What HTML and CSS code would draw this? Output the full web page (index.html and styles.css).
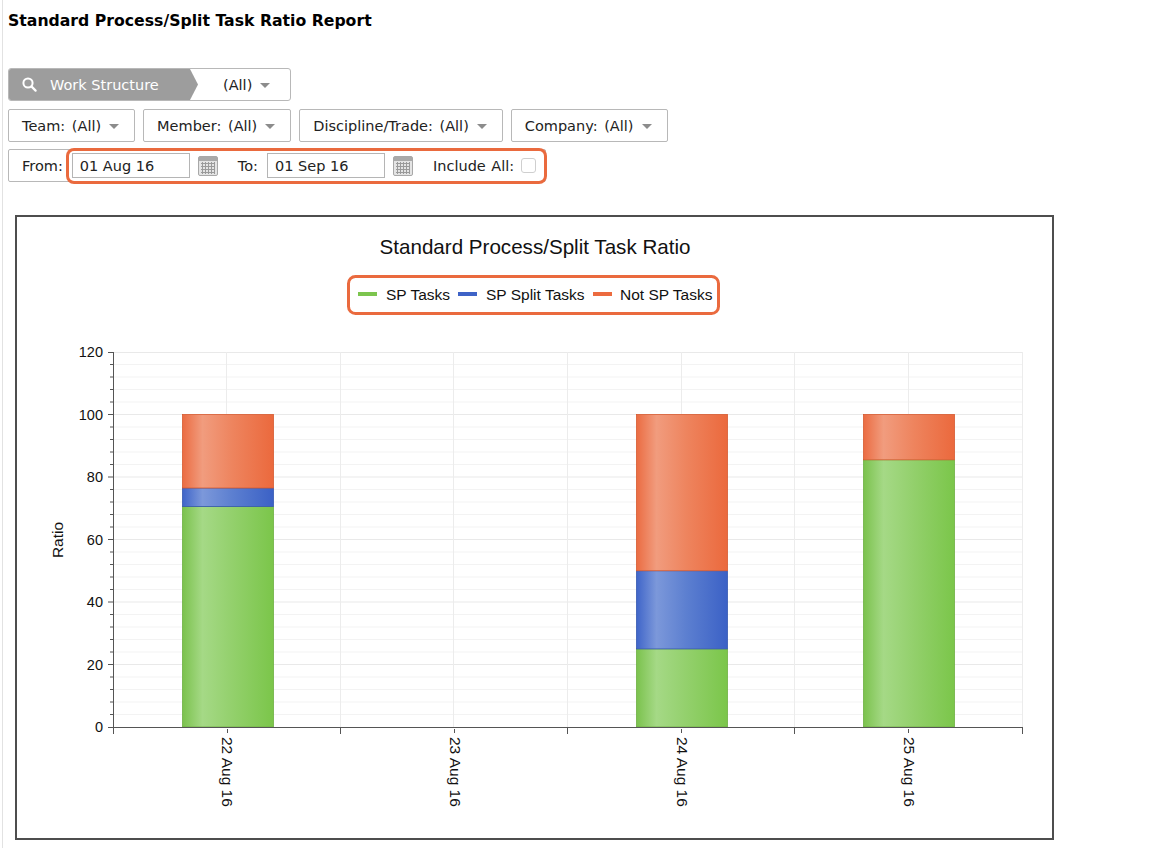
FILE: index.html
```html
<!DOCTYPE html>
<html>
<head>
<meta charset="utf-8">
<title>Standard Process/Split Task Ratio Report</title>
<link rel="stylesheet" href="styles.css">
</head>
<body>
<div class="page">
  <h1 class="title">Standard Process/Split Task Ratio Report</h1>

  <div class="filters">
    <div class="row">
      <div class="ws">
        <div class="ws-label">
          <svg class="search" width="15" height="15" viewBox="0 0 15 15"><circle cx="6" cy="6" r="4.6" fill="none" stroke="#fff" stroke-width="2"/><line x1="9.4" y1="9.4" x2="13.6" y2="13.6" stroke="#fff" stroke-width="2.2" stroke-linecap="round"/></svg>
          <span>Work Structure</span>
        </div>
        <div class="ws-value"><span>(All)</span><span class="caret"></span></div>
      </div>
    </div>

    <div class="row">
      <div class="dd"><span>Team: (All)</span><span class="caret"></span></div>
      <div class="dd"><span>Member: (All)</span><span class="caret"></span></div>
      <div class="dd"><span>Discipline/Trade: (All)</span><span class="caret"></span></div>
      <div class="dd"><span>Company: (All)</span><span class="caret"></span></div>
    </div>

    <div class="row">
      <div class="dates">
        <span class="lbl">From:</span>
        <div class="hl">
          <div class="inp">01 Aug 16</div>
          <svg class="cal" width="20" height="20" viewBox="0 0 20 20">
            <rect x="0.5" y="0.5" width="19" height="19" rx="1.5" fill="#e4e4e4" stroke="#a8a8a8"/>
            <rect x="1" y="1" width="18" height="4" fill="#a9a9a9"/>
            <path d="M3 7.5H17M3 10.5H17M3 13.5H17M3 16.5H17M4.5 6V18M7.5 6V18M10.5 6V18M13.5 6V18M16.5 6V18" stroke="#9a9a9a" stroke-width="1"/>
          </svg>
          <span class="to">To:</span>
          <div class="inp">01 Sep 16</div>
          <svg class="cal" width="20" height="20" viewBox="0 0 20 20">
            <rect x="0.5" y="0.5" width="19" height="19" rx="1.5" fill="#e4e4e4" stroke="#a8a8a8"/>
            <rect x="1" y="1" width="18" height="4" fill="#a9a9a9"/>
            <path d="M3 7.5H17M3 10.5H17M3 13.5H17M3 16.5H17M4.5 6V18M7.5 6V18M10.5 6V18M13.5 6V18M16.5 6V18" stroke="#9a9a9a" stroke-width="1"/>
          </svg>
          <span class="inc">Include All:</span>
          <span class="chk"></span>
        </div>
      </div>
    </div>
  </div>

  <div class="chart">
    <svg width="1035" height="621" viewBox="0 0 1035 621" font-family="'Liberation Sans', Arial, sans-serif">
      <defs>
        <linearGradient id="gGreen" x1="0" y1="0" x2="1" y2="0">
          <stop offset="0" stop-color="#7bc24d"/>
          <stop offset="0.22" stop-color="#a5d986"/>
          <stop offset="0.55" stop-color="#93d06c"/>
          <stop offset="1" stop-color="#7bc64a"/>
        </linearGradient>
        <linearGradient id="gBlue" x1="0" y1="0" x2="1" y2="0">
          <stop offset="0" stop-color="#3f65c9"/>
          <stop offset="0.22" stop-color="#7c98da"/>
          <stop offset="0.55" stop-color="#5c7fd0"/>
          <stop offset="1" stop-color="#3b61c6"/>
        </linearGradient>
        <linearGradient id="gOrange" x1="0" y1="0" x2="1" y2="0">
          <stop offset="0" stop-color="#eb6c42"/>
          <stop offset="0.22" stop-color="#f19c7e"/>
          <stop offset="0.55" stop-color="#ee845e"/>
          <stop offset="1" stop-color="#eb693d"/>
        </linearGradient>
      </defs>

      <text x="518" y="37" font-size="20.6" text-anchor="middle" fill="#111">Standard Process/Split Task Ratio</text>

      <g font-size="15.5" fill="#111">
        <rect x="341" y="75" width="19" height="4" fill="#7cc54e"/>
        <text x="369" y="82.5">SP Tasks</text>
        <rect x="441" y="75" width="19" height="4" fill="#3e63c7"/>
        <text x="469" y="82.5">SP Split Tasks</text>
        <rect x="576" y="75" width="19" height="4" fill="#ec6b3f"/>
        <text x="603" y="82.5">Not SP Tasks</text>
      </g>
      <rect x="331.5" y="59.5" width="370" height="37" rx="7" fill="none" stroke="#ea6a3e" stroke-width="3"/>

      <!-- minor horizontal grid -->
      <path stroke="#f3f3f3" stroke-width="1" d="M96 147.5H1005M96 160H1005M96 172.5H1005M96 185H1005M96 210H1005M96 222.5H1005M96 235H1005M96 247.5H1005M96 272.5H1005M96 285H1005M96 297.5H1005M96 310H1005M96 335H1005M96 347.5H1005M96 360H1005M96 372.5H1005M96 397.5H1005M96 410H1005M96 422.5H1005M96 435H1005M96 460H1005M96 472.5H1005M96 485H1005M96 497.5H1005"/>
      <!-- major horizontal grid -->
      <path stroke="#e9e9e9" stroke-width="1" d="M96 135.5H1005M96 197.5H1005M96 260H1005M96 322.5H1005M96 385H1005M96 447.5H1005"/>
      <!-- vertical grid -->
      <path stroke="#ececec" stroke-width="1" d="M209.5 135V510M323.5 135V510M436.5 135V510M550.5 135V510M664.5 135V510M777.5 135V510M891.5 135V510M1005.5 135V510"/>

      <!-- bars: 22 Aug -->
      <rect x="165.5" y="289.4" width="91" height="220.6" fill="url(#gGreen)" stroke="#6eb043" stroke-width="0.8"/>
      <rect x="165.5" y="271.0" width="91" height="18.4" fill="url(#gBlue)" stroke="#3557b0" stroke-width="0.8"/>
      <rect x="165.5" y="197.5" width="91" height="73.5" fill="url(#gOrange)" stroke="#d65a30" stroke-width="0.8"/>
      <!-- bars: 24 Aug -->
      <rect x="619.5" y="431.9" width="91" height="78.1" fill="url(#gGreen)" stroke="#6eb043" stroke-width="0.8"/>
      <rect x="619.5" y="353.75" width="91" height="78.15" fill="url(#gBlue)" stroke="#3557b0" stroke-width="0.8"/>
      <rect x="619.5" y="197.5" width="91" height="156.25" fill="url(#gOrange)" stroke="#d65a30" stroke-width="0.8"/>
      <!-- bars: 25 Aug -->
      <rect x="846.5" y="242.8" width="91" height="267.2" fill="url(#gGreen)" stroke="#6eb043" stroke-width="0.8"/>
      <rect x="846.5" y="197.5" width="91" height="45.3" fill="url(#gOrange)" stroke="#d65a30" stroke-width="0.8"/>

      <!-- axes -->
      <path stroke="#555" stroke-width="1" fill="none" d="M96.5 135V510.5M96 510.5H1005.5"/>
      <!-- y ticks -->
      <path stroke="#555" stroke-width="1" d="M93 147.5H96M93 160H96M93 172.5H96M93 185H96M93 210H96M93 222.5H96M93 235H96M93 247.5H96M93 272.5H96M93 285H96M93 297.5H96M93 310H96M93 335H96M93 347.5H96M93 360H96M93 372.5H96M93 397.5H96M93 410H96M93 422.5H96M93 435H96M93 460H96M93 472.5H96M93 485H96M93 497.5H96M91 135.5H96M91 197.5H96M91 260H96M91 322.5H96M91 385H96M91 447.5H96M91 510.5H96"/>
      <!-- x ticks -->
      <path stroke="#555" stroke-width="1" d="M96.5 510V517M323.5 510V517M550.5 510V517M777.5 510V517M1005.5 510V517M210.5 512V516M437.5 512V516M664.5 512V516M891.5 512V516"/>

      <g font-size="14.5" fill="#111" text-anchor="end">
        <text x="86" y="140">120</text>
        <text x="86" y="202.5">100</text>
        <text x="86" y="265">80</text>
        <text x="86" y="327.5">60</text>
        <text x="86" y="390">40</text>
        <text x="86" y="452.5">20</text>
        <text x="86" y="515">0</text>
      </g>
      <text transform="translate(45.5,323) rotate(-90)" font-size="15.5" text-anchor="middle" fill="#111">Ratio</text>

      <g font-size="15.5" fill="#111">
        <text transform="translate(204.5,520) rotate(90)">22 Aug 16</text>
        <text transform="translate(432.5,520) rotate(90)">23 Aug 16</text>
        <text transform="translate(659.5,520) rotate(90)">24 Aug 16</text>
        <text transform="translate(886.5,520) rotate(90)">25 Aug 16</text>
      </g>
    </svg>
  </div>
</div>
</body>
</html>
```

FILE: styles.css
```css
html, body {
  margin: 0;
  padding: 0;
  background: #fff;
}

body {
  font-family: "DejaVu Sans", Verdana, sans-serif;
  color: #111;
}

.page {
  margin-left: 2px;
  border-left: 1px solid #e2e2e2;
  padding: 11px 0 20px 5px;
  min-height: 820px;
}

.title {
  margin: 0;
  font-size: 15.7px;
  line-height: 19px;
  font-weight: bold;
  color: #000;
}

.filters {
  margin-top: 38px;
  display: flex;
  flex-direction: column;
  gap: 8px;
  font-size: 14.5px;
  color: #222;
}

.row {
  display: flex;
  gap: 8px;
  align-items: center;
}

.row + .row + .row {
  margin-top: -1px;
}

/* Work structure selector */
.ws {
  display: flex;
  height: 33px;
  width: 283px;
  box-sizing: border-box;
  border: 1px solid #b8b8b8;
  border-radius: 3px;
  overflow: hidden;
}

.ws-label {
  width: 189px;
  flex: none;
  background: #9d9d9d;
  color: #fff;
  display: flex;
  align-items: center;
  padding-left: 13px;
  box-sizing: border-box;
  clip-path: polygon(0 0, calc(100% - 8px) 0, 100% 50%, calc(100% - 8px) 100%, 0 100%);
}

.ws-label .search {
  margin-right: 13px;
}

.ws-value {
  flex: 1;
  display: flex;
  align-items: center;
  padding-left: 25px;
  gap: 8px;
}

.caret {
  width: 0;
  height: 0;
  border-left: 5px solid transparent;
  border-right: 5px solid transparent;
  border-top: 5px solid #8c8c8c;
  margin-top: 1px;
}

/* dropdowns */
.dd {
  height: 33px;
  box-sizing: border-box;
  border: 1px solid #b8b8b8;
  border-radius: 2px;
  display: flex;
  align-items: center;
  gap: 8px;
  padding: 0 15px 0 13px;
  word-spacing: 2px;
}

/* date range */
.dates {
  height: 33px;
  box-sizing: border-box;
  border: 1px solid #b8b8b8;
  border-radius: 2px;
  display: flex;
  align-items: center;
  padding: 0 1px 0 13px;
}

.dates .lbl {
  margin-right: 6px;
}

.hl {
  display: flex;
  align-items: center;
  height: 30px;
  padding: 0 8px 0 3px;
  border-radius: 5px;
  box-shadow: 0 0 0 3px #ea6a3e;
}

.inp {
  width: 118px;
  height: 25px;
  box-sizing: border-box;
  border: 1px solid #b5b5b5;
  padding: 4px 0 0 7px;
  font-size: 14.5px;
  line-height: 17px;
  color: #222;
}

.cal {
  margin-left: 8px;
  display: block;
}

.to {
  margin-left: 20px;
  margin-right: 9px;
}

.inc {
  margin-left: 20px;
  margin-right: 7px;
  word-spacing: 1px;
}

.chk {
  width: 15px;
  height: 15px;
  box-sizing: border-box;
  border: 1px solid #cfcfcf;
  border-radius: 3px;
  background: #fff;
}

/* chart */
.chart {
  margin: 33px 0 0 7px;
  width: 1039px;
  height: 625px;
  box-sizing: border-box;
  border: 2px solid #4e4e4e;
  background: #fff;
}

.chart svg {
  display: block;
}
```
